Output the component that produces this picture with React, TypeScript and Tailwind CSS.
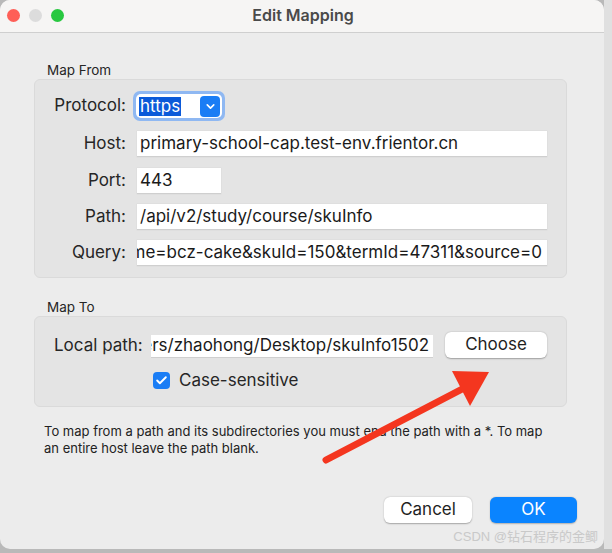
import { Check, ChevronDown } from "lucide-react";

const font = { fontFamily: 'Inter, "Liberation Sans", Arial, sans-serif' };

function Field({ label, value, width, end }: { label: string; value: string; width: string; end?: boolean }) {
  return (
    <div className="flex items-center h-[26px]">
      <div className="w-[92px] text-right text-[17px] text-[#262626] pr-[1px]">{label}</div>
      <div
        className={`ml-[10px] h-[26px] bg-white border-b border-[#cfcfcf] shadow-[0_0_0_0.5px_#dadada] flex items-center overflow-hidden whitespace-nowrap ${width} ${end ? "justify-end pr-[5px]" : "pl-[3px]"}`}
      >
        <span className="text-[17px] text-[#1a1a1a]">{value}</span>
      </div>
    </div>
  );
}

export default function App() {
  return (
    <div className="w-[612px] h-[553px] bg-[#b9b9b9] relative overflow-hidden" style={font}>
      <div className="absolute right-0 top-0 w-[8px] h-[549px] bg-[#e0e0e0]" />
      <div className="w-[604px] h-[549px] bg-[#ececec] rounded-[10px] overflow-hidden flex flex-col relative">
        {/* title bar */}
        <div className="h-[33px] shrink-0 bg-[#f6f5f4] border-b border-[#cfcfcf] flex items-center relative">
          <div className="flex gap-[9px] pl-[7px] -mt-[2px]">
            <span className="w-[13px] h-[13px] rounded-full bg-[#fe5f57]" />
            <span className="w-[13px] h-[13px] rounded-full bg-[#dcdcdc]" />
            <span className="w-[13px] h-[13px] rounded-full bg-[#28c840]" />
          </div>
          <div className="absolute inset-0 flex items-center justify-center text-[16px] font-semibold text-[#4a4a4a] pl-[2px] -mt-[2px]">
            Edit Mapping
          </div>
        </div>

        <div className="flex flex-col pl-[34px] pt-[28px]">
          <div className="pl-[13px] h-[18px] text-[13.5px] leading-[18px] text-[#262626]">Map From</div>
          <div className="w-[533px] h-[199px] bg-[#e4e4e4] border border-[#dadada] rounded-[6px] pt-[11px] flex flex-col">
            <div className="flex items-center h-[30px]">
              <div className="w-[92px] text-right text-[17px] text-[#262626] pr-[1px]">Protocol:</div>
              <div className="ml-[6px] w-[92px] h-[30px] rounded-[7px] bg-[#8fb8f2] p-[3px]">
                <div className="w-full h-full bg-white rounded-[5px] flex items-center justify-between pl-[3px] pr-[2px]">
                  <span className="bg-[#0b5ad9] text-white text-[17px] leading-[19px] px-[1px]">https</span>
                  <span className="w-[20px] h-[21px] rounded-[4px] bg-[#1a7df5] flex items-center justify-center">
                    <ChevronDown className="w-[13px] h-[13px] text-white" strokeWidth={3} />
                  </span>
                </div>
              </div>
            </div>
            <div className="mt-[10px]">
              <Field label="Host:" value="primary-school-cap.test-env.frientor.cn" width="w-[410px]" />
            </div>
            <div className="mt-[11px]">
              <Field label="Port:" value="443" width="w-[84px]" />
            </div>
            <div className="mt-[10px]">
              <Field label="Path:" value="/api/v2/study/course/skuInfo" width="w-[410px]" />
            </div>
            <div className="mt-[10px]">
              <Field label="Query:" value="name=bcz-cake&skuId=150&termId=47311&source=0" width="w-[410px]" end />
            </div>
          </div>

          <div className="pl-[13px] mt-[20px] h-[18px] text-[13.5px] leading-[18px] text-[#262626]">Map To</div>
          <div className="w-[533px] h-[91px] bg-[#e4e4e4] border border-[#dadada] rounded-[6px] pt-[16px] flex flex-col">
            <div className="flex items-center h-[26px]">
              <div className="w-[116px] pl-[19px] text-[17px] text-[#262626] whitespace-nowrap">Local path:</div>
              <div className="w-[282px] h-[23px] bg-white border-b border-[#cfcfcf] flex items-center justify-end overflow-hidden whitespace-nowrap pr-[4px]">
                <span className="text-[17px] text-[#1a1a1a]">/Users/zhaohong/Desktop/skuInfo1502</span>
              </div>
              <button className="ml-[12px] w-[102px] h-[26px] bg-white rounded-[6px] shadow-[0_0.5px_1.5px_rgba(0,0,0,0.3)] text-[17px] text-[#1f1f1f] -mt-[2px]">
                Choose
              </button>
            </div>
            <div className="flex items-center mt-[9px] pl-[118px]">
              <span className="w-[17px] h-[17px] rounded-[4px] bg-[#1a7df5] flex items-center justify-center">
                <Check className="w-[13px] h-[13px] text-white" strokeWidth={3.5} />
              </span>
              <span className="ml-[9px] text-[17px] text-[#262626]">Case-sensitive</span>
            </div>
          </div>

          <div className="mt-[16px] pl-[10px] text-[13px] leading-[17px] text-[#222]">
            To map from a path and its subdirectories you must end the path with a *. To map
            <br />
            an entire host leave the path blank.
          </div>

          <div className="flex justify-end gap-[18px] pr-[27px] mt-[40px]">
            <button className="w-[88px] h-[26px] bg-white rounded-[6px] shadow-[0_0.5px_1.5px_rgba(0,0,0,0.3)] text-[17px] text-[#1f1f1f]">
              Cancel
            </button>
            <button className="w-[87px] h-[26px] bg-[#0a84ff] rounded-[6px] shadow-[0_0.5px_1.5px_rgba(0,0,0,0.25)] text-[17px] text-white">
              OK
            </button>
          </div>
        </div>

        <div
          className="absolute right-[6px] bottom-[3px] text-[13px] text-[#c9c9c9]"
          style={{ fontFamily: '"Liberation Sans", "Noto Sans CJK SC", sans-serif' }}
        >
          CSDN @钻石程序的金鲫
        </div>
      </div>

      <svg className="absolute left-0 top-0 pointer-events-none" width="612" height="553">
        <line x1="326" y1="460" x2="468" y2="386" stroke="#f4361f" strokeWidth="7" strokeLinecap="round" />
        <polygon points="452,371 489,372 470,406" fill="#f4361f" />
      </svg>
    </div>
  );
}
